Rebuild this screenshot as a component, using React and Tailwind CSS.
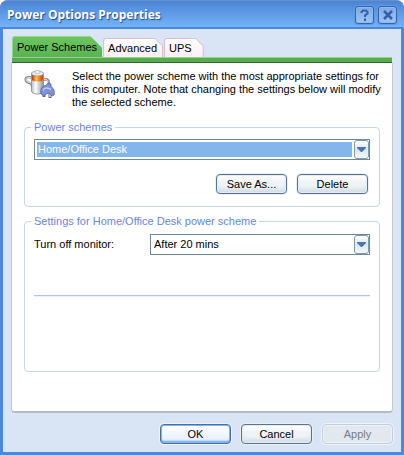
import React from "react";

function TitleButton({ label, children }) {
  return (
    <button
      type="button"
      aria-label={label}
      className="flex h-[18px] w-[19px] items-center justify-center rounded-[3px] border border-[#3763a8] bg-linear-to-b from-[#7ca9e6] to-[#9cc6f5] shadow-[0_0_0_1px_#5f9ae6,inset_0_0_0_1px_#8fb8ec]"
    >
      {children}
    </button>
  );
}

function Tab({ active, last, children }) {
  return (
    <button
      type="button"
      role="tab"
      aria-selected={active}
      className={
        active
          ? "h-[21px] rounded-tl-[3px] bg-[#8fd687] pt-px pl-px [clip-path:polygon(0_0,calc(100%-12px)_0,100%_12px,100%_100%,0_100%)]"
          : "h-[19px] rounded-tl-[3px] bg-[#dcbccb] p-px pb-0 [clip-path:polygon(0_0,calc(100%-8px)_0,100%_8px,100%_100%,0_100%)]"
      }
    >
      <span
        className={
          active
            ? "flex h-full items-center rounded-tl-[2px] bg-linear-to-b from-[#6cc560] to-[#5cb253] pr-[5px] pl-1"
            : `flex h-full items-center rounded-tl-[2px] bg-linear-to-b from-white to-[#fdeef5] pl-1 [clip-path:polygon(0_0,calc(100%-7px)_0,100%_7px,100%_100%,0_100%)] ${last ? "pr-[11px]" : "pr-[5px]"}`
        }
      >
        {children}
      </span>
    </button>
  );
}

function Combo({ id, label, selected, options }) {
  return (
    <div className="relative flex-1">
      <select
        id={id}
        aria-label={label}
        className={
          selected
            ? "block h-[21px] w-full appearance-none border border-[#6f8797] bg-[#84b5eb] pl-[3px] text-white shadow-[inset_0_0_0_2px_white] outline-none"
            : "block h-[21px] w-full appearance-none border border-[#6f8797] bg-white pl-[3px] text-black outline-none"
        }
      >
        {options.map((o) => (
          <option key={o}>{o}</option>
        ))}
      </select>
      <span className="pointer-events-none absolute inset-y-px right-px flex w-[17px] bg-white pl-[2px]">
        <span className="flex flex-1 items-center justify-center rounded-[3px] border border-[#7d9bb0] bg-linear-to-b from-white via-[#dde5ec] to-[#f4f8fa]">
          <svg width="9" height="5" viewBox="0 0 9 5" aria-hidden="true">
            <path d="M0 0h9v1L5 5H4L0 1z" fill="#4a79a8" />
          </svg>
        </span>
      </span>
    </div>
  );
}

function PushButton({ kind, children }) {
  const look = {
    normal:
      "border-[#56748f] bg-linear-to-b from-white via-[#eef2f5] to-white to-90% via-45% text-black shadow-[0_0_0_1px_#eceef0,inset_0_0_0_1px_#e3edf5,inset_0_-7px_4px_-2px_#d3dfe7]",
    primary:
      "border-[#4a6f9c] bg-linear-to-b from-white to-[#e4edfb] text-black shadow-[0_0_0_1px_#eef3fa,inset_0_0_0_1px_#7db4fb,inset_0_-2px_2px_#64a5fa]",
    disabled:
      "border-[#c3ccd8] bg-[#e2e8ef] text-[#777b80] shadow-[0_0_0_1px_#eef3fa,inset_0_0_0_1px_#eef2f6]",
  };
  return (
    <button
      type="button"
      disabled={kind === "disabled"}
      className={`flex h-[20px] w-[71px] items-center justify-center rounded-[4px] border ${look[kind]}`}
    >
      {children}
    </button>
  );
}

function PowerIcon() {
  return (
    <svg width="32" height="32" viewBox="0 2 32 32" aria-hidden="true" className="shrink-0">
      <defs>
        <linearGradient id="cell" x1="0" x2="1">
          <stop offset="0" stopColor="#b8bcc4" />
          <stop offset=".35" stopColor="#ffffff" />
          <stop offset="1" stopColor="#8b91a0" />
        </linearGradient>
        <linearGradient id="band" x1="0" x2="1">
          <stop offset="0" stopColor="#c2330c" />
          <stop offset=".4" stopColor="#ffc23a" />
          <stop offset="1" stopColor="#d4380f" />
        </linearGradient>
      </defs>
      <path d="M8 10C2 7 0 12 3 14s5 0 5 5M19 12c5-2 7 1 5 5" fill="none" stroke="#8e939f" strokeWidth="2.500" />
      <path d="M8 10C2 8 1 12 3 13.500s5 0 5 4M19 12c4-2 6 1 4 5" fill="none" stroke="#e3e5ea" />
      <path d="M7.500 5v18c0 4 12 4 12 0V5z" fill="url(#cell)" stroke="#85899a" strokeWidth=".8" />
      <path d="M8 7v5c2 2 9 2 11 0V7z" fill="url(#band)" />
      <ellipse cx="13.500" cy="5.500" rx="6" ry="2.500" fill="#e8e9ed" stroke="#8e929c" strokeWidth=".7" />
      <ellipse cx="13.500" cy="4" rx="2.500" ry="1.500" fill="#fafafa" stroke="#9a9ea8" strokeWidth=".6" />
      <path d="M20 24v5m6-4v5" stroke="#6c6480" strokeWidth="3" />
      <path d="M20 25v3m6-2v3" stroke="#e6cf86" strokeWidth="1.500" />
      <path d="M17 26c-1-5 1-8 5-8.500l2-2.500 3 1v3c3 1 4 5 3 8l-2 1-3-3-3 1-2 2z" fill="#8090da" stroke="#5563a6" strokeWidth=".8" />
      <path d="M19 22.500c1-3 4-3 8-1" fill="none" stroke="#c3ccf5" strokeWidth="1.500" />
    </svg>
  );
}

export default function App() {
  return (
    <div className="bg-white font-['Liberation_Sans',Arial,sans-serif] text-[11px] leading-[13px] text-black">
      <div className="flex min-h-screen flex-col rounded-t-[8px] border-x-3 border-b-3 border-[#4d86da] bg-[#d9e5f5]">
        <header className="-mx-[3px] flex h-[29px] items-center justify-between rounded-t-[8px] border-t border-b-2 border-t-[#6b8fc4] border-b-[#4a86dc] bg-linear-to-b from-[#4b84d5] to-[#74b3f8] pt-px pr-[7px] pl-[7px]">
          <h1 className="font-['Open_Sans','Noto_Sans',sans-serif] text-[12px] font-bold text-white [text-shadow:1px_1px_1px_#1e4c96]">
            Power Options Properties
          </h1>
          <div className="flex gap-1">
            <TitleButton label="Help">
              <svg width="9" height="12" viewBox="0 0 9 12" aria-hidden="true">
                <path d="M1.500 4V3l1.500-1.500h3L7.500 3v1.500L5 6.500V8M5 9.500V12" fill="none" stroke="#3260a8" strokeWidth="2" />
              </svg>
            </TitleButton>
            <TitleButton label="Close">
              <svg width="10" height="10" viewBox="0 0 10 10" aria-hidden="true">
                <path d="M1 1l8 8M9 1L1 9" fill="none" stroke="#3260a8" strokeWidth="2.500" />
              </svg>
            </TitleButton>
          </div>
        </header>

        <main className="flex flex-1 flex-col px-2 pt-[7px]">
          <div role="tablist" className="flex items-end gap-px pl-px">
            <Tab active>Power Schemes</Tab>
            <Tab>Advanced</Tab>
            <Tab last>UPS</Tab>
          </div>
          <div className="mr-px ml-px h-[6px] border-t border-b border-t-[#8fd687] border-b-[#2f6a2b] bg-[#58ab4e]" />

          <section className="flex flex-1 flex-col rounded-b-[4px] border-x border-b-2 border-x-[#c3ccd6] border-b-[#b4bcc0] bg-white px-3 pt-[7px] pb-[39px]">
            <div className="flex h-[39px] gap-[16px]">
              <PowerIcon />
              <p className="flex-1 whitespace-nowrap">
                Select the power scheme with the most appropriate settings for
                <br />
                this computer. Note that changing the settings below will modify
                <br />
                the selected scheme.
              </p>
            </div>

            <fieldset className="mt-[11px] rounded-[4px] border border-[#c5d5ea] px-[9px] pt-[5px] pb-[12px]">
              <legend className="-ml-[3px] px-[3px] leading-[14px] text-[#6b86e0]">Power schemes</legend>
              <div className="flex">
                <Combo
                  id="scheme"
                  label="Power scheme"
                  selected
                  options={["Home/Office Desk", "Portable/Laptop", "Presentation", "Always On"]}
                />
              </div>
              <div className="mt-[14px] flex justify-end gap-[10px] pr-[2px]">
                <PushButton kind="normal">Save As...</PushButton>
                <PushButton kind="normal">Delete</PushButton>
              </div>
            </fieldset>

            <fieldset className="mt-[7px] flex-1 rounded-[4px] border border-[#c5d5ea] px-[9px] pt-[6px]">
              <legend className="-ml-[3px] px-[3px] leading-[14px] text-[#6b86e0]">
                Settings for Home/Office Desk power scheme
              </legend>
              <div className="flex items-center">
                <label htmlFor="monitor" className="w-[116px]">
                  Turn off monitor:
                </label>
                <Combo id="monitor" options={["After 20 mins", "After 30 mins", "After 1 hour", "Never"]} />
              </div>
              <hr className="mt-[40px] h-[2px] border-t border-b border-t-[#aac8ee] border-b-[#edf2fa]" />
            </fieldset>
          </section>

          <footer className="flex justify-end gap-[10px] pt-[11px] pb-[8px]">
            <PushButton kind="primary">OK</PushButton>
            <PushButton kind="normal">Cancel</PushButton>
            <PushButton kind="disabled">Apply</PushButton>
          </footer>
        </main>
      </div>
    </div>
  );
}
